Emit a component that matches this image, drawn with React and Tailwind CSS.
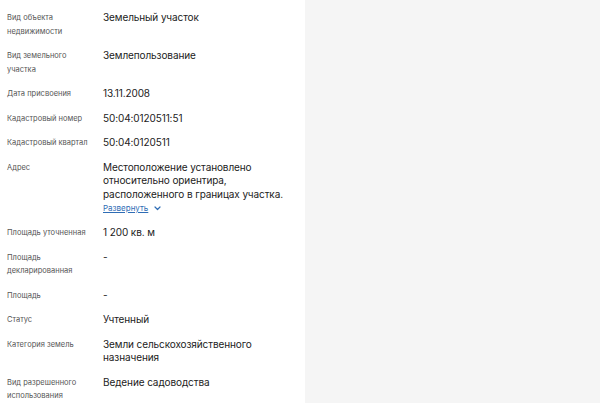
const rows = [
  { label: "Вид объекта недвижимости", value: "Земельный участок" },
  { label: "Вид земельного участка", value: "Землепользование" },
  { label: "Дата присвоения", value: "13.11.2008" },
  { label: "Кадастровый номер", value: "50:04:0120511:51" },
  { label: "Кадастровый квартал", value: "50:04:0120511" },
  {
    label: "Адрес",
    value: "Местоположение установлено относительно ориентира, расположенного в границах участка.",
    more: true,
  },
  { label: "Площадь уточненная", value: "1 200 кв. м" },
  { label: "Площадь декларированная", value: "-" },
  { label: "Площадь", value: "-" },
  { label: "Статус", value: "Учтенный" },
  { label: "Категория земель", value: "Земли сельскохозяйственного назначения" },
  { label: "Вид разрешенного использования", value: "Ведение садоводства" },
];

export default function App() {
  return (
    <div className="flex h-[403px] w-[600px] overflow-hidden bg-[#f5f5f5] font-['Inter',sans-serif]">
      <div className="flex w-[305px] shrink-0 flex-col gap-[11px] bg-white pl-[7px] pr-[10px] pt-[11px]">
        {rows.map((r) => (
          <div key={r.label} className="flex">
            <div className="w-[96px] shrink-0 pr-[8px] text-[7.5px] leading-[13.5px] text-[#555]">
              {r.label}
            </div>
            <div className="flex-1 text-[10px] leading-[13.5px] tracking-[-0.1px] text-[#222]">
              <div>{r.value}</div>
              {r.more && (
                <div className="flex items-center gap-[6px] text-[8px] leading-[14px] tracking-normal text-[#2f6db5]">
                  <span className="underline">Развернуть</span>
                  <svg width="7" height="5" viewBox="0 0 7 5" fill="none">
                    <path d="M1 1l2.5 2.5L6 1" stroke="#2f6db5" strokeWidth="1.2" strokeLinecap="round" strokeLinejoin="round" />
                  </svg>
                </div>
              )}
            </div>
          </div>
        ))}
      </div>
      <div className="flex-1" />
    </div>
  );
}
